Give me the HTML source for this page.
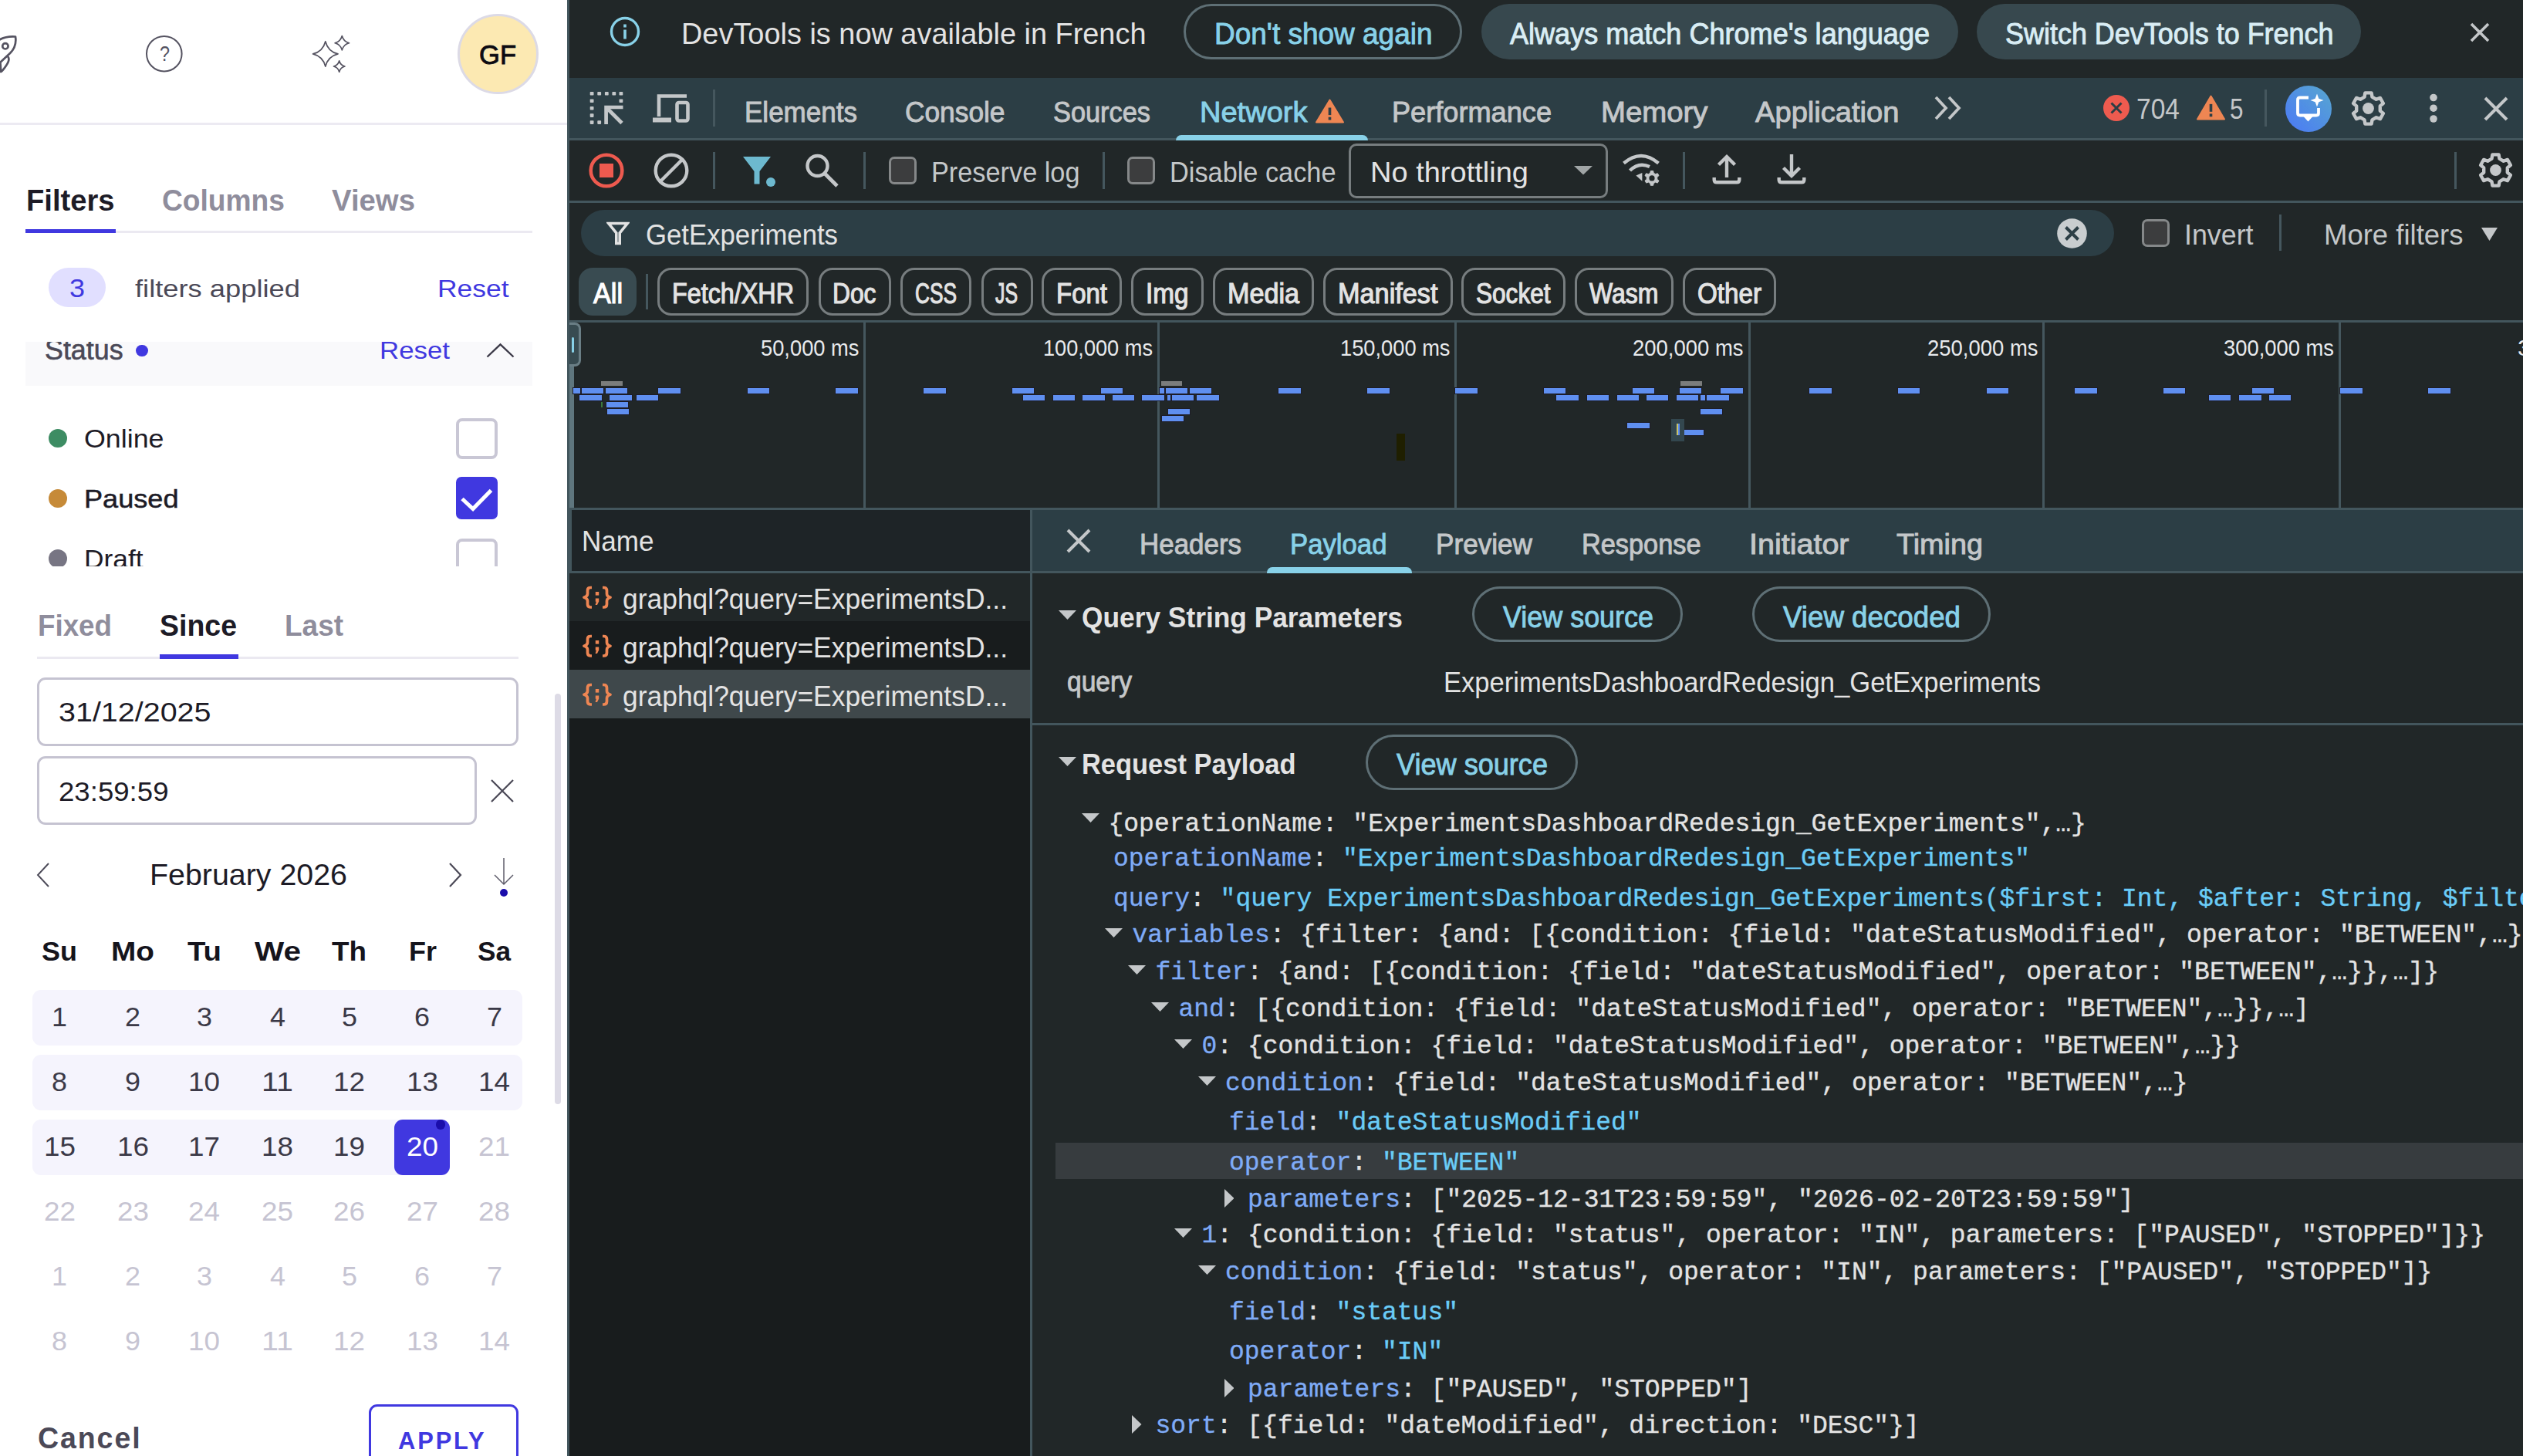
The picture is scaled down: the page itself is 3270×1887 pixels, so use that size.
<!DOCTYPE html>
<html><head><meta charset="utf-8"><title>Experiments</title><style>
html,body{margin:0;padding:0;}
body{width:3270px;height:1887px;overflow:hidden;position:relative;background:#fff;font-family:"Liberation Sans",sans-serif;}
.a{position:absolute;box-sizing:border-box;}
.t{position:absolute;white-space:pre;line-height:1;transform-origin:0 0;font-family:"Liberation Sans",sans-serif;}
.m{font-family:"Liberation Mono",monospace;}
</style></head>
<body>
<div class="a " style="left:0.0px;top:0.0px;width:735.0px;height:1887.0px;background:#ffffff;"></div>
<div class="a " style="left:0.0px;top:158.5px;width:735.0px;height:3.0px;background:#eceaf2;"></div>
<svg class="a" style="left:0.0px;top:40.0px;" width="30" height="60" viewBox="0 0 30 60"><g fill="none" stroke="#555361" stroke-width="2.7" stroke-linejoin="round" stroke-linecap="round"><path d="M-3 13 Q6 6.5 20 7.5 Q22 20 13 29 L-3 44"/><circle cx="6.9" cy="19.8" r="3.7"/><path d="M10.7 34 Q13 38 8 45 Q4 51 1.5 53 L-3 53 M0.5 42 L1.2 52"/></g></svg>
<svg class="a" style="left:188.0px;top:45.0px;" width="50" height="50" viewBox="0 0 50 50"><circle cx="24.8" cy="24.7" r="22.8" fill="none" stroke="#555361" stroke-width="2"/></svg>
<svg class="a" style="left:400.0px;top:40.0px;" width="60" height="60" viewBox="0 0 60 60"><g fill="none" stroke="#555361" stroke-width="1.7" stroke-linejoin="round"><path d="M21.8 13.7 Q25.04 26.659999999999997 38.0 29.9 Q25.04 33.14 21.8 46.099999999999994 Q18.560000000000002 33.14 5.600000000000001 29.9 Q18.560000000000002 26.659999999999997 21.8 13.7Z"/><path d="M43.3 6.5 Q45.14 13.86 52.5 15.7 Q45.14 17.54 43.3 24.9 Q41.459999999999994 17.54 34.099999999999994 15.7 Q41.459999999999994 13.86 43.3 6.5Z"/><path d="M39.7 38.8 Q41.14 44.56 46.900000000000006 46 Q41.14 47.44 39.7 53.2 Q38.260000000000005 47.44 32.5 46 Q38.260000000000005 44.56 39.7 38.8Z"/></g></svg>
<div class="a " style="left:593.3px;top:17.5px;width:104.7px;height:104.7px;background:#fce9b2;border-radius:50%;border:3px solid #dcdae6;"></div>
<div class="a " style="left:33.0px;top:298.5px;width:657.0px;height:3.0px;background:#ebe9f1;"></div>
<div class="a " style="left:33.0px;top:296.5px;width:117.0px;height:5.5px;background:#4038e0;"></div>
<div class="a " style="left:63.0px;top:346.5px;width:74.0px;height:51.0px;background:#e1dfff;border-radius:26px;"></div>
<div class="a " style="left:33.0px;top:442.5px;width:657.0px;height:57.0px;background:#f9f9fb;"></div>
<div class="a" style="left:33px;top:443px;width:657px;height:56px;overflow:hidden;"><span class="t" style="left:25px;top:-7.1px;font-size:36px;color:#4b4957;-webkit-text-stroke:0.6px;transform:scaleX(0.995)">Status</span></div>
<div class="a " style="left:176.0px;top:446.5px;width:15.5px;height:15.5px;background:#4038e0;border-radius:50%;"></div>
<svg class="a" style="left:629.0px;top:443.0px;" width="40" height="22" viewBox="0 0 40 22"><path d="M2.5 19.5 L19.5 3.5 L36.5 19.5" fill="none" stroke="#3b3947" stroke-width="2.4"/></svg>
<div class="a " style="left:63.0px;top:556.0px;width:24.0px;height:24.0px;background:#3d8c63;border-radius:50%;"></div>
<div class="a " style="left:591.0px;top:541.5px;width:53.5px;height:53.0px;background:#ffffff;border:4px solid #c9c7d5;border-radius:8px;"></div>
<div class="a " style="left:63.0px;top:634.0px;width:24.0px;height:24.0px;background:#c68a38;border-radius:50%;"></div>
<div class="a " style="left:591.0px;top:618.0px;width:53.5px;height:54.5px;background:#4038e0;border-radius:7px;"></div>
<svg class="a" style="left:591.0px;top:618.0px;" width="54" height="55" viewBox="0 0 54 55"><path d="M8 28.5 L22 41.5 L45.5 17.5" fill="none" stroke="#fff" stroke-width="5"/></svg>
<div class="a" style="left:33px;top:690px;width:657px;height:44px;overflow:hidden;"><div class="a" style="left:30px;top:22px;width:24px;height:24px;border-radius:50%;background:#777583"></div><span class="t" style="left:76px;top:17.2px;font-size:34px;color:#1d1b26;transform:scaleX(1.04)">Draft</span><div class="a" style="left:558px;top:7.5px;width:53.5px;height:53px;border:4px solid #c9c7d5;border-radius:8px;"></div></div>
<div class="a " style="left:48.0px;top:850.5px;width:624.0px;height:3.0px;background:#ebe9f1;"></div>
<div class="a " style="left:206.5px;top:848.0px;width:102.5px;height:5.5px;background:#4038e0;"></div>
<div class="a " style="left:48.0px;top:877.5px;width:624.0px;height:89.5px;background:#fff;border:3px solid #c5c3d1;border-radius:11px;"></div>
<div class="a " style="left:48.0px;top:980.0px;width:570.0px;height:89.0px;background:#fff;border:3px solid #c5c3d1;border-radius:11px;"></div>
<svg class="a" style="left:634.0px;top:1008.0px;" width="34" height="34" viewBox="0 0 34 34"><path d="M3 3 L31 31 M31 3 L3 31" fill="none" stroke="#4b4957" stroke-width="2.2"/></svg>
<div class="a " style="left:719.0px;top:899.0px;width:7.5px;height:532.0px;background:#dddbe6;border-radius:4px;"></div>
<svg class="a" style="left:44.0px;top:1116.0px;" width="24" height="36" viewBox="0 0 24 36"><path d="M19 3 L5 18 L19 33" fill="none" stroke="#4b4957" stroke-width="1.9"/></svg>
<svg class="a" style="left:578.0px;top:1116.0px;" width="24" height="36" viewBox="0 0 24 36"><path d="M5 3 L19 18 L5 33" fill="none" stroke="#4b4957" stroke-width="2.2"/></svg>
<svg class="a" style="left:638.0px;top:1109.0px;" width="30" height="42" viewBox="0 0 30 42"><path d="M15 3 L15 37 M3 25 L15 37 L27 25" fill="none" stroke="#5f5d6b" stroke-width="1.5"/></svg>
<div class="a " style="left:647.5px;top:1151.5px;width:10.5px;height:10.5px;background:#1a0dab;border-radius:50%;"></div>
<div class="a " style="left:42.0px;top:1283.0px;width:635.0px;height:71.5px;background:#f5f4fd;border-radius:11px;"></div>
<div class="a " style="left:42.0px;top:1367.0px;width:635.0px;height:71.5px;background:#f5f4fd;border-radius:11px;"></div>
<div class="a " style="left:42.0px;top:1451.0px;width:520.0px;height:71.5px;background:#f5f4fd;border-radius:11px;"></div>
<div class="a " style="left:511.0px;top:1451.0px;width:72.0px;height:71.5px;background:#4038e0;border-radius:11px;"></div>
<div class="a " style="left:564.5px;top:1451.0px;width:12.5px;height:12.5px;background:#1a0dab;border-radius:50%;"></div>
<div class="a " style="left:477.5px;top:1820.0px;width:194.5px;height:90.0px;background:#fff;border:3.5px solid #4038e0;border-radius:11px;"></div>
<div class="a " style="left:735.0px;top:0.0px;width:2535.0px;height:1887.0px;background:#212728;"></div>
<div class="a " style="left:735.0px;top:0.0px;width:3.0px;height:1887.0px;background:#43565d;"></div>
<svg class="a" style="left:789.0px;top:20.0px;" width="42" height="42" viewBox="0 0 42 42"><circle cx="21" cy="21" r="17.5" fill="none" stroke="#88d1e8" stroke-width="3.4"/><rect x="19.2" y="18.5" width="3.6" height="12" fill="#88d1e8"/><rect x="19.2" y="11.5" width="3.6" height="4" fill="#88d1e8"/></svg>
<div class="a " style="left:1534.0px;top:5.0px;width:361.0px;height:72.0px;border:3px solid #5e6f75;border-radius:36px;"></div>
<div class="a " style="left:1920.0px;top:5.0px;width:617.5px;height:72.0px;background:#37484e;border-radius:36px;"></div>
<div class="a " style="left:2562.0px;top:5.0px;width:498.0px;height:72.0px;background:#37484e;border-radius:36px;"></div>
<svg class="a" style="left:3198.0px;top:26.0px;" width="32" height="32" viewBox="0 0 32 32"><path d="M5 5 L27 27 M27 5 L5 27" fill="none" stroke="#c4c7c9" stroke-width="3.6"/></svg>
<div class="a " style="left:738.0px;top:101.0px;width:2532.0px;height:78.0px;background:#2c3e45;"></div>
<div class="a " style="left:738.0px;top:179.0px;width:2532.0px;height:3.0px;background:#43565d;"></div>
<svg class="a" style="left:764.0px;top:118.0px;" width="45" height="45" viewBox="0 0 45 45"><rect x="0.7" y="1" width="4.8" height="4.6" rx="0.8" fill="#c4c7c9"/><rect x="10.3" y="1" width="4.8" height="4.6" rx="0.8" fill="#c4c7c9"/><rect x="19.9" y="1" width="4.8" height="4.6" rx="0.8" fill="#c4c7c9"/><rect x="29.4" y="1" width="4.8" height="4.6" rx="0.8" fill="#c4c7c9"/><rect x="38.5" y="1" width="4.8" height="4.6" rx="0.8" fill="#c4c7c9"/><rect x="0.7" y="10.5" width="4.8" height="4.6" rx="0.8" fill="#c4c7c9"/><rect x="0.7" y="20" width="4.8" height="4.6" rx="0.8" fill="#c4c7c9"/><rect x="0.7" y="29.3" width="4.8" height="4.6" rx="0.8" fill="#c4c7c9"/><rect x="0.7" y="38.3" width="4.8" height="4.6" rx="0.8" fill="#c4c7c9"/><rect x="10.3" y="38.3" width="4.8" height="4.6" rx="0.8" fill="#c4c7c9"/><rect x="38.5" y="10.5" width="4.8" height="4.6" rx="0.8" fill="#c4c7c9"/><path d="M21.6 43 V21 H43.5" fill="none" stroke="#c4c7c9" stroke-width="4.7"/><path d="M22.5 22 L42 41.5" stroke="#c4c7c9" stroke-width="4.7"/></svg>
<svg class="a" style="left:845.0px;top:121.0px;" width="50" height="39" viewBox="0 0 50 39"><g fill="none" stroke="#c4c7c9" stroke-width="4.6"><path d="M45 3.5 H9 V30"/><path d="M1 34.5 H25" stroke-width="6"/><rect x="32.5" y="12" width="14" height="23.5" rx="2.5"/></g></svg>
<div class="a " style="left:924.0px;top:116.0px;width:3.0px;height:48.0px;background:#45575e;"></div>
<svg class="a" style="left:1704.5px;top:128.0px;" width="37" height="32" viewBox="0 0 37 32"><path d="M18.5 1.5 L36 30.5 L1 30.5 Z" fill="#ee8653" stroke="#ee8653" stroke-width="2" stroke-linejoin="round"/><rect x="16.7" y="11.52" width="3.6" height="9.6" fill="#2c3e45"/><rect x="16.7" y="23.68" width="3.6" height="3.8" fill="#2c3e45"/></svg>
<div class="a " style="left:1524.0px;top:174.5px;width:249.0px;height:7.5px;background:#88d1e8;border-radius:7px 7px 0 0;"></div>
<svg class="a" style="left:2505.0px;top:121.0px;" width="40" height="38" viewBox="0 0 40 38"><path d="M4 5 L17 19 L4 33 M21 5 L34 19 L21 33" fill="none" stroke="#c4c7c9" stroke-width="3.8"/></svg>
<svg class="a" style="left:2725.0px;top:122.0px;" width="36" height="36" viewBox="0 0 36 36"><circle cx="18" cy="18" r="17" fill="#ee5b4f"/><path d="M11.5 11.5 L24.5 24.5 M24.5 11.5 L11.5 24.5" stroke="#2c3e45" stroke-width="3"/></svg>
<svg class="a" style="left:2847.0px;top:123.0px;" width="37" height="33" viewBox="0 0 37 33"><path d="M18.5 1.5 L36 31.5 L1 31.5 Z" fill="#ee8653" stroke="#ee8653" stroke-width="2" stroke-linejoin="round"/><rect x="16.7" y="11.879999999999999" width="3.6" height="9.9" fill="#2c3e45"/><rect x="16.7" y="24.419999999999998" width="3.6" height="3.8" fill="#2c3e45"/></svg>
<div class="a " style="left:2935.0px;top:116.0px;width:3.0px;height:48.0px;background:#45575e;"></div>
<div class="a " style="left:2961.5px;top:110.5px;width:60.0px;height:60.0px;border-radius:50%;background:linear-gradient(45deg,#4c7df3 10%,#56a3d3 90%);"></div>
<svg class="a" style="left:2961.0px;top:110.0px;" width="61" height="61" viewBox="0 0 61 61"><path d="M31 16.5 H20 Q17 16.5 17 19.5 V36.5 Q17 39.5 20 39.5 H41 Q44 39.5 44 36.5 V30" fill="none" stroke="#fff" stroke-width="3.8" stroke-linejoin="round"/><path d="M24.5 41 H36.5 L30.5 47.5Z" fill="#fff"/><path d="M42 11.5 L44.3 17.7 L50.5 20 L44.3 22.3 L42 28.5 L39.7 22.3 L33.5 20 L39.7 17.7Z" fill="#fff"/></svg>
<svg class="a" style="left:3045.0px;top:115.5px;" width="49.0" height="49.0" viewBox="0 0 49.0 49.0"><path d="M20.4 4.4 L28.6 4.4 L29.5 9.7 L34.8 12.8 L39.9 10.9 L43.9 18.0 L39.8 21.4 L39.8 27.6 L43.9 31.0 L39.9 38.1 L34.8 36.2 L29.5 39.3 L28.6 44.6 L20.4 44.6 L19.5 39.3 L14.2 36.2 L9.1 38.1 L5.1 31.0 L9.2 27.6 L9.2 21.4 L5.1 18.0 L9.1 10.9 L14.2 12.8 L19.5 9.7 Z" fill="none" stroke="#c4c7c9" stroke-width="4.4" stroke-linejoin="round"/><circle cx="24.5" cy="24.5" r="7.4" fill="#c4c7c9"/></svg>
<svg class="a" style="left:3143.0px;top:118.0px;" width="22" height="46" viewBox="0 0 22 46"><circle cx="11" cy="8.5" r="4.8" fill="#c4c7c9"/><circle cx="11" cy="22.2" r="4.8" fill="#c4c7c9"/><circle cx="11" cy="36" r="4.8" fill="#c4c7c9"/></svg>
<svg class="a" style="left:3218.0px;top:124.0px;" width="34" height="34" viewBox="0 0 34 34"><path d="M3 3 L31 31 M31 3 L3 31" fill="none" stroke="#c4c7c9" stroke-width="4"/></svg>
<div class="a " style="left:738.0px;top:260.0px;width:2532.0px;height:3.0px;background:#43565d;"></div>
<svg class="a" style="left:762.0px;top:197.0px;" width="48" height="48" viewBox="0 0 48 48"><circle cx="24" cy="24" r="20.3" fill="none" stroke="#ee5a4f" stroke-width="4.6"/><rect x="15" y="15" width="18" height="18" fill="#ee5a4f"/></svg>
<svg class="a" style="left:846.0px;top:197.0px;" width="48" height="48" viewBox="0 0 48 48"><circle cx="24" cy="24" r="20.3" fill="none" stroke="#c4c7c9" stroke-width="4.4"/><path d="M10 38 L38 10" stroke="#c4c7c9" stroke-width="4.4"/></svg>
<div class="a " style="left:924.0px;top:197.0px;width:3.0px;height:48.0px;background:#45575e;"></div>
<svg class="a" style="left:961.0px;top:201.0px;" width="48" height="42" viewBox="0 0 48 42"><path d="M2 2 H38 L23.5 21 V37.5 H16.5 V21 Z" fill="#6db9cf"/><circle cx="38" cy="35" r="6" fill="#6db9cf"/></svg>
<svg class="a" style="left:1040.0px;top:196.0px;" width="50" height="50" viewBox="0 0 50 50"><circle cx="19.5" cy="19" r="13" fill="none" stroke="#c4c7c9" stroke-width="4.4"/><path d="M28.5 28.5 L45 45" stroke="#c4c7c9" stroke-width="4.8"/></svg>
<div class="a " style="left:1119.0px;top:197.0px;width:3.0px;height:48.0px;background:#45575e;"></div>
<div class="a " style="left:1152.0px;top:203.0px;width:36.0px;height:36.0px;background:#3c3d3e;border:3px solid #858889;border-radius:7px;"></div>
<div class="a " style="left:1428.5px;top:197.0px;width:3.0px;height:48.0px;background:#45575e;"></div>
<div class="a " style="left:1460.5px;top:203.0px;width:36.0px;height:36.0px;background:#3c3d3e;border:3px solid #858889;border-radius:7px;"></div>
<div class="a " style="left:1748.0px;top:185.5px;width:336.0px;height:71.0px;border:3px solid #777d7f;border-radius:10px;"></div>
<svg class="a" style="left:2039.0px;top:214.0px;" width="27" height="14" viewBox="0 0 27 14"><path d="M1 1 H25 L13 12.5Z" fill="#a0a5a6"/></svg>
<svg class="a" style="left:2102.0px;top:197.0px;" width="52" height="46" viewBox="0 0 52 46"><g fill="none" stroke="#c4c7c9" stroke-width="4.4"><path d="M2.5 14.5 Q25 -4.5 47.5 14.5"/><path d="M10.5 24 Q22 12.5 36 19"/></g><path d="M18.4 30.5 L26.4 27 L26.4 37.7Z" fill="#c4c7c9"/><path d="M37.3 24.5 L40.7 24.5 L41.2 27.2 L43.7 28.7 L46.3 27.7 L48.0 30.6 L45.8 32.4 L45.8 35.4 L48.0 37.2 L46.3 40.1 L43.7 39.1 L41.2 40.6 L40.7 43.3 L37.3 43.3 L36.8 40.6 L34.3 39.1 L31.7 40.1 L30.0 37.2 L32.2 35.4 L32.2 32.4 L30.0 30.6 L31.7 27.7 L34.3 28.7 L36.8 27.2 Z" fill="#c4c7c9" stroke="#c4c7c9" stroke-width="1" stroke-linejoin="round"/><circle cx="39" cy="33.9" r="3.6" fill="#212728"/></svg>
<div class="a " style="left:2181.0px;top:197.0px;width:3.0px;height:48.0px;background:#45575e;"></div>
<svg class="a" style="left:2218.0px;top:198.0px;" width="40" height="42" viewBox="0 0 40 42"><g fill="none" stroke="#c4c7c9" stroke-width="4.4"><path d="M20 32 V5 M9.5 15.5 L20 5 L30.5 15.5"/><path d="M3.7 32 V35 Q3.7 38.3 7 38.3 H33 Q36.3 38.3 36.3 35 V32"/></g></svg>
<svg class="a" style="left:2302.0px;top:198.0px;" width="40" height="42" viewBox="0 0 40 42"><g fill="none" stroke="#c4c7c9" stroke-width="4.4"><path d="M20 2 V29 M9.5 19.5 L20 30 L30.5 19.5"/><path d="M3.7 32 V35 Q3.7 38.3 7 38.3 H33 Q36.3 38.3 36.3 35 V32"/></g></svg>
<div class="a " style="left:3181.0px;top:197.0px;width:3.0px;height:48.0px;background:#45575e;"></div>
<svg class="a" style="left:3210.0px;top:196.0px;" width="49.0" height="49.0" viewBox="0 0 49.0 49.0"><path d="M20.4 4.4 L28.6 4.4 L29.5 9.7 L34.8 12.8 L39.9 10.9 L43.9 18.0 L39.8 21.4 L39.8 27.6 L43.9 31.0 L39.9 38.1 L34.8 36.2 L29.5 39.3 L28.6 44.6 L20.4 44.6 L19.5 39.3 L14.2 36.2 L9.1 38.1 L5.1 31.0 L9.2 27.6 L9.2 21.4 L5.1 18.0 L9.1 10.9 L14.2 12.8 L19.5 9.7 Z" fill="none" stroke="#c4c7c9" stroke-width="4.4" stroke-linejoin="round"/><circle cx="24.5" cy="24.5" r="7.4" fill="#c4c7c9"/></svg>
<div class="a " style="left:752.5px;top:272.0px;width:1987.5px;height:59.5px;background:#2c3e45;border-radius:30px;"></div>
<svg class="a" style="left:786.0px;top:287.0px;" width="30" height="31" viewBox="0 0 30 31"><path d="M2.8 2.5 H27.2 L17.2 15 V28.5 H12.8 V15 Z" fill="none" stroke="#e3e3e3" stroke-width="3.6" stroke-linejoin="miter"/></svg>
<svg class="a" style="left:2666.0px;top:283.0px;" width="39" height="39" viewBox="0 0 39 39"><circle cx="19.5" cy="19.5" r="19.3" fill="#c9cdcf"/><path d="M11.5 11.5 L27.5 27.5 M27.5 11.5 L11.5 27.5" stroke="#2c3e45" stroke-width="4"/></svg>
<div class="a " style="left:2775.5px;top:284.0px;width:36.0px;height:36.0px;background:#3c3d3e;border:3px solid #858889;border-radius:7px;"></div>
<div class="a " style="left:2954.0px;top:278.0px;width:3.0px;height:47.0px;background:#45575e;"></div>
<svg class="a" style="left:3215.0px;top:294.0px;" width="23" height="19" viewBox="0 0 23 19"><path d="M1 1 H22 L11.5 18Z" fill="#c4c7c9"/></svg>
<div class="a " style="left:750.0px;top:347.0px;width:75.0px;height:61.5px;background:#394b51;border-radius:18px;"></div>
<div class="a " style="left:837.0px;top:355.0px;width:2.5px;height:46.0px;background:#45575e;"></div>
<div class="a " style="left:852.0px;top:347.0px;width:196.0px;height:61.5px;border:3px solid #777d7f;border-radius:18px;"></div>
<div class="a " style="left:1060.5px;top:347.0px;width:94.5px;height:61.5px;border:3px solid #777d7f;border-radius:18px;"></div>
<div class="a " style="left:1167.0px;top:347.0px;width:92.0px;height:61.5px;border:3px solid #777d7f;border-radius:18px;"></div>
<div class="a " style="left:1271.5px;top:347.0px;width:67.0px;height:61.5px;border:3px solid #777d7f;border-radius:18px;"></div>
<div class="a " style="left:1350.0px;top:347.0px;width:104.0px;height:61.5px;border:3px solid #777d7f;border-radius:18px;"></div>
<div class="a " style="left:1466.0px;top:347.0px;width:93.5px;height:61.5px;border:3px solid #777d7f;border-radius:18px;"></div>
<div class="a " style="left:1572.0px;top:347.0px;width:131.0px;height:61.5px;border:3px solid #777d7f;border-radius:18px;"></div>
<div class="a " style="left:1715.0px;top:347.0px;width:167.5px;height:61.5px;border:3px solid #777d7f;border-radius:18px;"></div>
<div class="a " style="left:1894.0px;top:347.0px;width:134.5px;height:61.5px;border:3px solid #777d7f;border-radius:18px;"></div>
<div class="a " style="left:2041.0px;top:347.0px;width:127.5px;height:61.5px;border:3px solid #777d7f;border-radius:18px;"></div>
<div class="a " style="left:2181.0px;top:347.0px;width:121.0px;height:61.5px;border:3px solid #777d7f;border-radius:18px;"></div>
<div class="a " style="left:738.0px;top:414.5px;width:2532.0px;height:3.0px;background:#43565d;"></div>
<div class="a " style="left:738.0px;top:417.5px;width:6.0px;height:241.0px;background:#5f767e;"></div>
<div class="a " style="left:1119.0px;top:417.5px;width:3.0px;height:241.0px;background:#45575e;"></div>
<div class="a " style="left:1500.0px;top:417.5px;width:3.0px;height:241.0px;background:#45575e;"></div>
<div class="a " style="left:1885.0px;top:417.5px;width:3.0px;height:241.0px;background:#45575e;"></div>
<div class="a " style="left:2266.0px;top:417.5px;width:3.0px;height:241.0px;background:#45575e;"></div>
<div class="a " style="left:2647.0px;top:417.5px;width:3.0px;height:241.0px;background:#45575e;"></div>
<div class="a " style="left:3031.0px;top:417.5px;width:3.0px;height:241.0px;background:#45575e;"></div>
<div class="a " style="left:738.0px;top:418.0px;width:15.0px;height:57.0px;background:#384b51;border-radius:0 8px 8px 0;border:3px solid #6a7e85;border-left:none;"></div>
<div class="a " style="left:741.0px;top:436.5px;width:3.0px;height:20.5px;background:#88d1e8;border-radius:1.5px;"></div>
<div class="a " style="left:742.4px;top:501.8px;width:10.6px;height:9.2px;background:#5f8ff0;border:1.6px solid #1d1c27;"></div>
<div class="a " style="left:753.2px;top:501.8px;width:30.3px;height:9.2px;background:#5f8ff0;border:1.6px solid #1d1c27;"></div>
<div class="a " style="left:784.2px;top:501.8px;width:30.3px;height:9.2px;background:#5f8ff0;border:1.6px solid #1d1c27;"></div>
<div class="a " style="left:852.4px;top:501.8px;width:30.9px;height:9.2px;background:#5f8ff0;border:1.6px solid #1d1c27;"></div>
<div class="a " style="left:967.5px;top:501.8px;width:30.6px;height:9.2px;background:#5f8ff0;border:1.6px solid #1d1c27;"></div>
<div class="a " style="left:1081.6px;top:501.8px;width:31.2px;height:9.2px;background:#5f8ff0;border:1.6px solid #1d1c27;"></div>
<div class="a " style="left:1196.4px;top:501.8px;width:30.9px;height:9.2px;background:#5f8ff0;border:1.6px solid #1d1c27;"></div>
<div class="a " style="left:1311.2px;top:501.8px;width:30.3px;height:9.2px;background:#5f8ff0;border:1.6px solid #1d1c27;"></div>
<div class="a " style="left:1425.6px;top:501.8px;width:30.6px;height:9.2px;background:#5f8ff0;border:1.6px solid #1d1c27;"></div>
<div class="a " style="left:1502.4px;top:501.8px;width:7.8px;height:9.2px;background:#5f8ff0;border:1.6px solid #1d1c27;"></div>
<div class="a " style="left:1509.7px;top:501.8px;width:30.6px;height:9.2px;background:#5f8ff0;border:1.6px solid #1d1c27;"></div>
<div class="a " style="left:750.0px;top:510.9px;width:30.9px;height:9.2px;background:#5f8ff0;border:1.6px solid #1d1c27;"></div>
<div class="a " style="left:789.0px;top:510.9px;width:30.6px;height:9.2px;background:#5f8ff0;border:1.6px solid #1d1c27;"></div>
<div class="a " style="left:823.9px;top:510.9px;width:30.6px;height:9.2px;background:#5f8ff0;border:1.6px solid #1d1c27;"></div>
<div class="a " style="left:1324.8px;top:510.9px;width:30.6px;height:9.2px;background:#5f8ff0;border:1.6px solid #1d1c27;"></div>
<div class="a " style="left:1363.5px;top:510.9px;width:30.9px;height:9.2px;background:#5f8ff0;border:1.6px solid #1d1c27;"></div>
<div class="a " style="left:1401.9px;top:510.9px;width:30.9px;height:9.2px;background:#5f8ff0;border:1.6px solid #1d1c27;"></div>
<div class="a " style="left:1440.5px;top:510.9px;width:30.9px;height:9.2px;background:#5f8ff0;border:1.6px solid #1d1c27;"></div>
<div class="a " style="left:1479.2px;top:510.9px;width:30.9px;height:9.2px;background:#5f8ff0;border:1.6px solid #1d1c27;"></div>
<div class="a " style="left:1511.9px;top:510.9px;width:6.2px;height:9.2px;background:#5f8ff0;border:1.6px solid #1d1c27;"></div>
<div class="a " style="left:1518.2px;top:510.9px;width:29.9px;height:9.2px;background:#5f8ff0;border:1.6px solid #1d1c27;"></div>
<div class="a " style="left:784.9px;top:519.9px;width:30.3px;height:9.2px;background:#5f8ff0;border:1.6px solid #1d1c27;"></div>
<div class="a " style="left:785.8px;top:529.0px;width:30.6px;height:9.2px;background:#5f8ff0;border:1.6px solid #1d1c27;"></div>
<div class="a " style="left:1512.8px;top:529.0px;width:30.6px;height:9.2px;background:#5f8ff0;border:1.6px solid #1d1c27;"></div>
<div class="a " style="left:1504.6px;top:538.0px;width:30.9px;height:9.2px;background:#5f8ff0;border:1.6px solid #1d1c27;"></div>
<div class="a " style="left:778.8px;top:494.3px;width:28.5px;height:6.0px;background:#7b7d7d;"></div>
<div class="a " style="left:1504.5px;top:494.3px;width:27.9px;height:6.0px;background:#7b7d7d;"></div>
<div class="a " style="left:778.8px;top:521.0px;width:2.0px;height:7.0px;background:#3c7a3c;"></div>
<div class="a " style="left:1540.5px;top:501.8px;width:30.3px;height:9.2px;background:#5f8ff0;border:1.6px solid #1d1c27;"></div>
<div class="a " style="left:1655.6px;top:501.8px;width:31.5px;height:9.2px;background:#5f8ff0;border:1.6px solid #1d1c27;"></div>
<div class="a " style="left:1770.7px;top:501.8px;width:30.9px;height:9.2px;background:#5f8ff0;border:1.6px solid #1d1c27;"></div>
<div class="a " style="left:1885.4px;top:501.8px;width:30.6px;height:9.2px;background:#5f8ff0;border:1.6px solid #1d1c27;"></div>
<div class="a " style="left:2000.2px;top:501.8px;width:30.3px;height:9.2px;background:#5f8ff0;border:1.6px solid #1d1c27;"></div>
<div class="a " style="left:2114.7px;top:501.8px;width:30.6px;height:9.2px;background:#5f8ff0;border:1.6px solid #1d1c27;"></div>
<div class="a " style="left:2176.2px;top:501.8px;width:30.3px;height:9.2px;background:#5f8ff0;border:1.6px solid #1d1c27;"></div>
<div class="a " style="left:2229.4px;top:501.8px;width:30.6px;height:9.2px;background:#5f8ff0;border:1.6px solid #1d1c27;"></div>
<div class="a " style="left:1550.3px;top:510.9px;width:31.2px;height:9.2px;background:#5f8ff0;border:1.6px solid #1d1c27;"></div>
<div class="a " style="left:2016.4px;top:510.9px;width:30.6px;height:9.2px;background:#5f8ff0;border:1.6px solid #1d1c27;"></div>
<div class="a " style="left:2055.7px;top:510.9px;width:30.3px;height:9.2px;background:#5f8ff0;border:1.6px solid #1d1c27;"></div>
<div class="a " style="left:2094.7px;top:510.9px;width:29.9px;height:9.2px;background:#5f8ff0;border:1.6px solid #1d1c27;"></div>
<div class="a " style="left:2132.7px;top:510.9px;width:30.6px;height:9.2px;background:#5f8ff0;border:1.6px solid #1d1c27;"></div>
<div class="a " style="left:2172.4px;top:510.9px;width:29.9px;height:9.2px;background:#5f8ff0;border:1.6px solid #1d1c27;"></div>
<div class="a " style="left:2202.5px;top:510.9px;width:8.7px;height:9.2px;background:#5f8ff0;border:1.6px solid #1d1c27;"></div>
<div class="a " style="left:2211.4px;top:510.9px;width:30.6px;height:9.2px;background:#5f8ff0;border:1.6px solid #1d1c27;"></div>
<div class="a " style="left:2202.5px;top:529.0px;width:30.6px;height:9.2px;background:#5f8ff0;border:1.6px solid #1d1c27;"></div>
<div class="a " style="left:2108.3px;top:546.8px;width:30.6px;height:9.2px;background:#5f8ff0;border:1.6px solid #1d1c27;"></div>
<div class="a " style="left:2181.2px;top:555.8px;width:27.4px;height:9.2px;background:#5f8ff0;border:1.6px solid #1d1c27;"></div>
<div class="a " style="left:2177.7px;top:494.3px;width:27.9px;height:6.0px;background:#7b7d7d;"></div>
<div class="a " style="left:2166.0px;top:542.5px;width:17.0px;height:29.5px;background:#33474f;"></div>
<div class="a " style="left:2172.5px;top:548.5px;width:2.0px;height:15.0px;background:#c9c46a;"></div>
<div class="a " style="left:2174.5px;top:548.5px;width:2.5px;height:15.0px;background:#5f8ff0;"></div>
<div class="a " style="left:1810.0px;top:562.0px;width:11.0px;height:35.0px;background:#1f1f00;"></div>
<div class="a " style="left:2344.0px;top:501.8px;width:30.6px;height:9.2px;background:#5f8ff0;border:1.6px solid #1d1c27;"></div>
<div class="a " style="left:2458.7px;top:501.8px;width:30.6px;height:9.2px;background:#5f8ff0;border:1.6px solid #1d1c27;"></div>
<div class="a " style="left:2573.5px;top:501.8px;width:30.3px;height:9.2px;background:#5f8ff0;border:1.6px solid #1d1c27;"></div>
<div class="a " style="left:2688.0px;top:501.8px;width:30.6px;height:9.2px;background:#5f8ff0;border:1.6px solid #1d1c27;"></div>
<div class="a " style="left:2802.7px;top:501.8px;width:29.9px;height:9.2px;background:#5f8ff0;border:1.6px solid #1d1c27;"></div>
<div class="a " style="left:2917.5px;top:501.8px;width:30.3px;height:9.2px;background:#5f8ff0;border:1.6px solid #1d1c27;"></div>
<div class="a " style="left:3032.0px;top:501.8px;width:30.6px;height:9.2px;background:#5f8ff0;border:1.6px solid #1d1c27;"></div>
<div class="a " style="left:2862.4px;top:510.9px;width:29.9px;height:9.2px;background:#5f8ff0;border:1.6px solid #1d1c27;"></div>
<div class="a " style="left:2901.0px;top:510.9px;width:30.6px;height:9.2px;background:#5f8ff0;border:1.6px solid #1d1c27;"></div>
<div class="a " style="left:2939.7px;top:510.9px;width:30.3px;height:9.2px;background:#5f8ff0;border:1.6px solid #1d1c27;"></div>
<div class="a " style="left:3146.3px;top:501.8px;width:30.8px;height:9.2px;background:#5f8ff0;border:1.6px solid #1d1c27;"></div>
<div class="a " style="left:738.0px;top:658.0px;width:2532.0px;height:3.0px;background:#43565d;"></div>
<div class="a " style="left:741.0px;top:661.0px;width:594.0px;height:78.5px;background:#1e2427;"></div>
<div class="a " style="left:738.0px;top:661.0px;width:3.0px;height:81.5px;background:#43565d;"></div>
<div class="a " style="left:741.0px;top:739.5px;width:594.0px;height:3.0px;background:#43565d;"></div>
<div class="a " style="left:1335.0px;top:661.0px;width:3.0px;height:1226.0px;background:#43565d;"></div>
<div class="a " style="left:738.0px;top:742.5px;width:597.0px;height:62.5px;background:#212728;"></div>
<div class="a " style="left:738.0px;top:805.0px;width:597.0px;height:62.5px;background:#181c1d;"></div>
<div class="a " style="left:738.0px;top:867.5px;width:597.0px;height:63.0px;background:#3f484b;"></div>
<div class="a " style="left:738.0px;top:930.5px;width:597.0px;height:957.0px;background:#181c1d;"></div>
<svg class="a" style="left:753.0px;top:759.0px;" width="42" height="31" viewBox="0 0 42 31"><g fill="none" stroke="#ee8653" stroke-width="3.7" stroke-linejoin="round"><path d="M14 2.5 H12.5 Q8.5 2.5 8.5 6.5 V10.5 Q8.5 14 4 15.2 Q8.5 16.4 8.5 20 V24 Q8.5 28 12.5 28 H14"/><path d="M28 2.5 H29.5 Q33.5 2.5 33.5 6.5 V10.5 Q33.5 14 38 15.2 Q33.5 16.4 33.5 20 V24 Q33.5 28 29.5 28 H28"/></g><rect x="18.8" y="8" width="4.4" height="4.6" fill="#ee8653"/><path d="M18.8 16.5 H23.2 V20.5 L21 25 H18.6 L19.8 20.8 H18.8Z" fill="#ee8653"/></svg>
<svg class="a" style="left:753.0px;top:822.0px;" width="42" height="31" viewBox="0 0 42 31"><g fill="none" stroke="#ee8653" stroke-width="3.7" stroke-linejoin="round"><path d="M14 2.5 H12.5 Q8.5 2.5 8.5 6.5 V10.5 Q8.5 14 4 15.2 Q8.5 16.4 8.5 20 V24 Q8.5 28 12.5 28 H14"/><path d="M28 2.5 H29.5 Q33.5 2.5 33.5 6.5 V10.5 Q33.5 14 38 15.2 Q33.5 16.4 33.5 20 V24 Q33.5 28 29.5 28 H28"/></g><rect x="18.8" y="8" width="4.4" height="4.6" fill="#ee8653"/><path d="M18.8 16.5 H23.2 V20.5 L21 25 H18.6 L19.8 20.8 H18.8Z" fill="#ee8653"/></svg>
<svg class="a" style="left:753.0px;top:884.5px;" width="42" height="31" viewBox="0 0 42 31"><g fill="none" stroke="#ee8653" stroke-width="3.7" stroke-linejoin="round"><path d="M14 2.5 H12.5 Q8.5 2.5 8.5 6.5 V10.5 Q8.5 14 4 15.2 Q8.5 16.4 8.5 20 V24 Q8.5 28 12.5 28 H14"/><path d="M28 2.5 H29.5 Q33.5 2.5 33.5 6.5 V10.5 Q33.5 14 38 15.2 Q33.5 16.4 33.5 20 V24 Q33.5 28 29.5 28 H28"/></g><rect x="18.8" y="8" width="4.4" height="4.6" fill="#ee8653"/><path d="M18.8 16.5 H23.2 V20.5 L21 25 H18.6 L19.8 20.8 H18.8Z" fill="#ee8653"/></svg>
<div class="a " style="left:1338.0px;top:661.0px;width:1932.0px;height:78.5px;background:#2c3e45;"></div>
<div class="a " style="left:1338.0px;top:739.5px;width:1932.0px;height:3.0px;background:#43565d;"></div>
<svg class="a" style="left:1381.0px;top:684.0px;" width="34" height="34" viewBox="0 0 34 34"><path d="M3 3 L31 31 M31 3 L3 31" fill="none" stroke="#c4c7c9" stroke-width="4"/></svg>
<div class="a " style="left:1641.5px;top:734.5px;width:188.5px;height:8.0px;background:#88d1e8;border-radius:7px 7px 0 0;"></div>
<svg class="a" style="left:1371.5px;top:790.5px;" width="23" height="12" viewBox="0 0 23 12"><path d="M0 0 H23 L11.5 12Z" fill="#c4c7c9"/></svg>
<div class="a " style="left:1908.0px;top:759.5px;width:273.0px;height:72.0px;border:3px solid #5e6f75;border-radius:36px;"></div>
<div class="a " style="left:2271.0px;top:759.5px;width:309.0px;height:72.0px;border:3px solid #5e6f75;border-radius:36px;"></div>
<div class="a " style="left:1338.0px;top:937.0px;width:1932.0px;height:3.0px;background:#43565d;"></div>
<svg class="a" style="left:1371.5px;top:981.0px;" width="23" height="12" viewBox="0 0 23 12"><path d="M0 0 H23 L11.5 12Z" fill="#c4c7c9"/></svg>
<div class="a " style="left:1770.0px;top:952.0px;width:274.5px;height:72.0px;border:3px solid #5e6f75;border-radius:36px;"></div>
<div class="a " style="left:1367.5px;top:1480.5px;width:1903.0px;height:47.0px;background:#373c3f;"></div>
<svg class="a" style="left:1402.0px;top:1054.0px;" width="23" height="12" viewBox="0 0 23 12"><path d="M0 0 H23 L11.5 12Z" fill="#c4c7c9"/></svg>
<svg class="a" style="left:1432.0px;top:1203.0px;" width="23" height="12" viewBox="0 0 23 12"><path d="M0 0 H23 L11.5 12Z" fill="#c4c7c9"/></svg>
<svg class="a" style="left:1462.0px;top:1251.0px;" width="23" height="12" viewBox="0 0 23 12"><path d="M0 0 H23 L11.5 12Z" fill="#c4c7c9"/></svg>
<svg class="a" style="left:1492.0px;top:1299.0px;" width="23" height="12" viewBox="0 0 23 12"><path d="M0 0 H23 L11.5 12Z" fill="#c4c7c9"/></svg>
<svg class="a" style="left:1522.0px;top:1347.0px;" width="23" height="12" viewBox="0 0 23 12"><path d="M0 0 H23 L11.5 12Z" fill="#c4c7c9"/></svg>
<svg class="a" style="left:1552.5px;top:1394.5px;" width="23" height="12" viewBox="0 0 23 12"><path d="M0 0 H23 L11.5 12Z" fill="#c4c7c9"/></svg>
<svg class="a" style="left:1586.5px;top:1541.0px;" width="12.5" height="24" viewBox="0 0 12.5 24"><path d="M0 0 V24 L12.5 12Z" fill="#c4c7c9"/></svg>
<svg class="a" style="left:1522.0px;top:1592.0px;" width="23" height="12" viewBox="0 0 23 12"><path d="M0 0 H23 L11.5 12Z" fill="#c4c7c9"/></svg>
<svg class="a" style="left:1552.5px;top:1640.0px;" width="23" height="12" viewBox="0 0 23 12"><path d="M0 0 H23 L11.5 12Z" fill="#c4c7c9"/></svg>
<svg class="a" style="left:1586.5px;top:1787.0px;" width="12.5" height="24" viewBox="0 0 12.5 24"><path d="M0 0 V24 L12.5 12Z" fill="#c4c7c9"/></svg>
<svg class="a" style="left:1467.0px;top:1834.0px;" width="12.5" height="24" viewBox="0 0 12.5 24"><path d="M0 0 V24 L12.5 12Z" fill="#c4c7c9"/></svg>
<span class="t" style="left:206.5px;top:56.3px;font-size:28px;color:#555361;transform:scaleX(0.8345);">?</span>
<span class="t" style="left:621.0px;top:53.1px;font-size:35px;color:#0c0b12;-webkit-text-stroke:0.9px;transform:scaleX(0.9875);">GF</span>
<span class="t" style="left:33.5px;top:241.3px;font-size:38px;color:#1d1b26;font-weight:700;transform:scaleX(1.0040);">Filters</span>
<span class="t" style="left:209.5px;top:241.3px;font-size:38px;color:#8f8d9c;font-weight:700;transform:scaleX(0.9781);">Columns</span>
<span class="t" style="left:429.5px;top:241.3px;font-size:38px;color:#8f8d9c;font-weight:700;transform:scaleX(1.0089);">Views</span>
<span class="t" style="left:90.0px;top:357.1px;font-size:33px;color:#4038e0;transform:scaleX(1.0894);">3</span>
<span class="t" style="left:174.5px;top:357.9px;font-size:32px;color:#4b4957;transform:scaleX(1.1350);">filters applied</span>
<span class="t" style="left:567.0px;top:357.9px;font-size:32px;color:#4038e0;transform:scaleX(1.1065);">Reset</span>
<span class="t" style="left:492.0px;top:438.4px;font-size:32px;color:#4038e0;transform:scaleX(1.0886);">Reset</span>
<span class="t" style="left:109.0px;top:551.2px;font-size:34px;color:#1d1b26;transform:scaleX(1.0531);">Online</span>
<span class="t" style="left:109.0px;top:629.2px;font-size:34px;color:#1d1b26;-webkit-text-stroke:0.5px;transform:scaleX(1.0622);">Paused</span>
<span class="t" style="left:48.5px;top:791.8px;font-size:38px;color:#8f8d9c;font-weight:700;transform:scaleX(0.9673);">Fixed</span>
<span class="t" style="left:206.5px;top:791.8px;font-size:38px;color:#1d1b26;font-weight:700;transform:scaleX(0.9863);">Since</span>
<span class="t" style="left:368.5px;top:791.8px;font-size:38px;color:#8f8d9c;font-weight:700;transform:scaleX(0.9726);">Last</span>
<span class="t" style="left:75.5px;top:905.4px;font-size:35px;color:#1d1b26;transform:scaleX(1.1275);">31/12/2025</span>
<span class="t" style="left:75.5px;top:1007.9px;font-size:35px;color:#1d1b26;transform:scaleX(1.0459);">23:59:59</span>
<span class="t" style="left:194.0px;top:1115.3px;font-size:38px;color:#1d1b26;transform:scaleX(1.0358);">February 2026</span>
<span class="t" style="left:54.0px;top:1214.9px;font-size:35px;color:#15141c;font-weight:700;transform:scaleX(1.0283);">Su</span>
<span class="t" style="left:144.0px;top:1214.9px;font-size:35px;color:#15141c;font-weight:700;transform:scaleX(1.1079);">Mo</span>
<span class="t" style="left:243.0px;top:1214.9px;font-size:35px;color:#15141c;font-weight:700;transform:scaleX(1.0953);">Tu</span>
<span class="t" style="left:330.0px;top:1214.9px;font-size:35px;color:#15141c;font-weight:700;transform:scaleX(1.1566);">We</span>
<span class="t" style="left:430.0px;top:1214.9px;font-size:35px;color:#15141c;font-weight:700;transform:scaleX(1.0522);">Th</span>
<span class="t" style="left:529.5px;top:1214.9px;font-size:35px;color:#15141c;font-weight:700;transform:scaleX(1.0286);">Fr</span>
<span class="t" style="left:619.0px;top:1214.9px;font-size:35px;color:#15141c;font-weight:700;transform:scaleX(1.0044);">Sa</span>
<span class="t" style="left:67.0px;top:1300.4px;font-size:35px;color:#3b3947;transform:scaleX(1.0273);">1</span>
<span class="t" style="left:162.0px;top:1300.4px;font-size:35px;color:#3b3947;transform:scaleX(1.0273);">2</span>
<span class="t" style="left:254.5px;top:1300.4px;font-size:35px;color:#3b3947;transform:scaleX(1.0273);">3</span>
<span class="t" style="left:349.5px;top:1300.4px;font-size:35px;color:#3b3947;transform:scaleX(1.0273);">4</span>
<span class="t" style="left:442.5px;top:1300.4px;font-size:35px;color:#3b3947;transform:scaleX(1.0273);">5</span>
<span class="t" style="left:537.0px;top:1300.4px;font-size:35px;color:#3b3947;transform:scaleX(1.0273);">6</span>
<span class="t" style="left:630.5px;top:1300.4px;font-size:35px;color:#3b3947;transform:scaleX(1.0273);">7</span>
<span class="t" style="left:67.0px;top:1383.9px;font-size:35px;color:#3b3947;transform:scaleX(1.0273);">8</span>
<span class="t" style="left:162.0px;top:1383.9px;font-size:35px;color:#3b3947;transform:scaleX(1.0273);">9</span>
<span class="t" style="left:244.0px;top:1383.9px;font-size:35px;color:#3b3947;transform:scaleX(1.0530);">10</span>
<span class="t" style="left:339.0px;top:1383.9px;font-size:35px;color:#3b3947;transform:scaleX(1.1281);">11</span>
<span class="t" style="left:432.0px;top:1383.9px;font-size:35px;color:#3b3947;transform:scaleX(1.0530);">12</span>
<span class="t" style="left:526.5px;top:1383.9px;font-size:35px;color:#3b3947;transform:scaleX(1.0530);">13</span>
<span class="t" style="left:620.0px;top:1383.9px;font-size:35px;color:#3b3947;transform:scaleX(1.0530);">14</span>
<span class="t" style="left:56.5px;top:1467.9px;font-size:35px;color:#3b3947;transform:scaleX(1.0530);">15</span>
<span class="t" style="left:151.5px;top:1467.9px;font-size:35px;color:#3b3947;transform:scaleX(1.0530);">16</span>
<span class="t" style="left:244.0px;top:1467.9px;font-size:35px;color:#3b3947;transform:scaleX(1.0530);">17</span>
<span class="t" style="left:339.0px;top:1467.9px;font-size:35px;color:#3b3947;transform:scaleX(1.0530);">18</span>
<span class="t" style="left:432.0px;top:1467.9px;font-size:35px;color:#3b3947;transform:scaleX(1.0530);">19</span>
<span class="t" style="left:526.5px;top:1467.9px;font-size:35px;color:#ffffff;transform:scaleX(1.0530);">20</span>
<span class="t" style="left:620.0px;top:1467.9px;font-size:35px;color:#c6c4d2;transform:scaleX(1.0530);">21</span>
<span class="t" style="left:56.5px;top:1551.9px;font-size:35px;color:#c6c4d2;transform:scaleX(1.0530);">22</span>
<span class="t" style="left:151.5px;top:1551.9px;font-size:35px;color:#c6c4d2;transform:scaleX(1.0530);">23</span>
<span class="t" style="left:244.0px;top:1551.9px;font-size:35px;color:#c6c4d2;transform:scaleX(1.0530);">24</span>
<span class="t" style="left:339.0px;top:1551.9px;font-size:35px;color:#c6c4d2;transform:scaleX(1.0530);">25</span>
<span class="t" style="left:432.0px;top:1551.9px;font-size:35px;color:#c6c4d2;transform:scaleX(1.0530);">26</span>
<span class="t" style="left:526.5px;top:1551.9px;font-size:35px;color:#c6c4d2;transform:scaleX(1.0530);">27</span>
<span class="t" style="left:620.0px;top:1551.9px;font-size:35px;color:#c6c4d2;transform:scaleX(1.0530);">28</span>
<span class="t" style="left:67.0px;top:1635.9px;font-size:35px;color:#c6c4d2;transform:scaleX(1.0273);">1</span>
<span class="t" style="left:162.0px;top:1635.9px;font-size:35px;color:#c6c4d2;transform:scaleX(1.0273);">2</span>
<span class="t" style="left:254.5px;top:1635.9px;font-size:35px;color:#c6c4d2;transform:scaleX(1.0273);">3</span>
<span class="t" style="left:349.5px;top:1635.9px;font-size:35px;color:#c6c4d2;transform:scaleX(1.0273);">4</span>
<span class="t" style="left:442.5px;top:1635.9px;font-size:35px;color:#c6c4d2;transform:scaleX(1.0273);">5</span>
<span class="t" style="left:537.0px;top:1635.9px;font-size:35px;color:#c6c4d2;transform:scaleX(1.0273);">6</span>
<span class="t" style="left:630.5px;top:1635.9px;font-size:35px;color:#c6c4d2;transform:scaleX(1.0273);">7</span>
<span class="t" style="left:67.0px;top:1719.9px;font-size:35px;color:#c6c4d2;transform:scaleX(1.0273);">8</span>
<span class="t" style="left:162.0px;top:1719.9px;font-size:35px;color:#c6c4d2;transform:scaleX(1.0273);">9</span>
<span class="t" style="left:244.0px;top:1719.9px;font-size:35px;color:#c6c4d2;transform:scaleX(1.0530);">10</span>
<span class="t" style="left:339.0px;top:1719.9px;font-size:35px;color:#c6c4d2;transform:scaleX(1.1281);">11</span>
<span class="t" style="left:432.0px;top:1719.9px;font-size:35px;color:#c6c4d2;transform:scaleX(1.0530);">12</span>
<span class="t" style="left:526.5px;top:1719.9px;font-size:35px;color:#c6c4d2;transform:scaleX(1.0530);">13</span>
<span class="t" style="left:620.0px;top:1719.9px;font-size:35px;color:#c6c4d2;transform:scaleX(1.0530);">14</span>
<span class="t" style="left:48.5px;top:1844.0px;font-size:39px;color:#4b4957;font-weight:700;letter-spacing:2px;transform:scaleX(0.9614);">Cancel</span>
<span class="t" style="left:515.5px;top:1850.9px;font-size:32px;color:#4038e0;font-weight:700;letter-spacing:3px;transform:scaleX(0.9642);">APPLY</span>
<span class="t" style="left:882.5px;top:24.0px;font-size:39px;color:#e3e3e3;transform:scaleX(0.9718);">DevTools is now available in French</span>
<span class="t" style="left:1573.5px;top:24.8px;font-size:38px;color:#88d1e8;-webkit-text-stroke:0.9px;transform:scaleX(0.9730);">Don&#x27;t show again</span>
<span class="t" style="left:1957.0px;top:24.8px;font-size:38px;color:#d9edf4;-webkit-text-stroke:0.9px;transform:scaleX(0.9489);">Always match Chrome&#x27;s language</span>
<span class="t" style="left:2598.5px;top:24.8px;font-size:38px;color:#d9edf4;-webkit-text-stroke:0.9px;transform:scaleX(0.9459);">Switch DevTools to French</span>
<span class="t" style="left:964.5px;top:128.0px;font-size:36px;color:#c4c7c9;-webkit-text-stroke:0.9px;transform:scaleX(0.9728);">Elements</span>
<span class="t" style="left:1173.0px;top:128.0px;font-size:36px;color:#c4c7c9;-webkit-text-stroke:0.9px;transform:scaleX(0.9804);">Console</span>
<span class="t" style="left:1365.0px;top:128.0px;font-size:36px;color:#c4c7c9;-webkit-text-stroke:0.9px;transform:scaleX(0.9540);">Sources</span>
<span class="t" style="left:1555.0px;top:128.0px;font-size:36px;color:#88d1e8;-webkit-text-stroke:0.9px;transform:scaleX(1.0566);">Network</span>
<span class="t" style="left:1804.0px;top:128.0px;font-size:36px;color:#c4c7c9;-webkit-text-stroke:0.9px;transform:scaleX(1.0044);">Performance</span>
<span class="t" style="left:2074.5px;top:128.0px;font-size:36px;color:#c4c7c9;-webkit-text-stroke:0.9px;transform:scaleX(1.0653);">Memory</span>
<span class="t" style="left:2275.0px;top:128.0px;font-size:36px;color:#c4c7c9;-webkit-text-stroke:0.9px;transform:scaleX(1.0589);">Application</span>
<span class="t" style="left:2769.0px;top:124.0px;font-size:36px;color:#c4c7c9;transform:scaleX(0.9321);">704</span>
<span class="t" style="left:2889.5px;top:124.0px;font-size:36px;color:#c4c7c9;transform:scaleX(0.8736);">5</span>
<span class="t" style="left:1207.0px;top:206.0px;font-size:36px;color:#c4c7c9;transform:scaleX(0.9525);">Preserve log</span>
<span class="t" style="left:1516.0px;top:206.0px;font-size:36px;color:#c4c7c9;transform:scaleX(0.9530);">Disable cache</span>
<span class="t" style="left:1775.5px;top:206.0px;font-size:36px;color:#e3e3e3;transform:scaleX(1.0561);">No throttling</span>
<span class="t" style="left:837.0px;top:286.5px;font-size:36px;color:#e3e3e3;transform:scaleX(0.9647);">GetExperiments</span>
<span class="t" style="left:2830.5px;top:286.5px;font-size:36px;color:#c4c7c9;transform:scaleX(0.9939);">Invert</span>
<span class="t" style="left:3011.5px;top:286.5px;font-size:36px;color:#c4c7c9;transform:scaleX(1.0139);">More filters</span>
<span class="t" style="left:768.5px;top:362.5px;font-size:36px;color:#ffffff;-webkit-text-stroke:1.15px;transform:scaleX(0.9496);">All</span>
<span class="t" style="left:870.5px;top:362.5px;font-size:36px;color:#e3e3e3;-webkit-text-stroke:1.15px;transform:scaleX(0.8975);">Fetch/XHR</span>
<span class="t" style="left:1079.0px;top:362.5px;font-size:36px;color:#e3e3e3;-webkit-text-stroke:1.15px;transform:scaleX(0.8824);">Doc</span>
<span class="t" style="left:1185.5px;top:362.5px;font-size:36px;color:#e3e3e3;-webkit-text-stroke:1.15px;transform:scaleX(0.7294);">CSS</span>
<span class="t" style="left:1290.0px;top:362.5px;font-size:36px;color:#e3e3e3;-webkit-text-stroke:1.15px;transform:scaleX(0.6902);">JS</span>
<span class="t" style="left:1368.5px;top:362.5px;font-size:36px;color:#e3e3e3;-webkit-text-stroke:1.15px;transform:scaleX(0.9161);">Font</span>
<span class="t" style="left:1484.5px;top:362.5px;font-size:36px;color:#e3e3e3;-webkit-text-stroke:1.15px;transform:scaleX(0.9248);">Img</span>
<span class="t" style="left:1590.5px;top:362.5px;font-size:36px;color:#e3e3e3;-webkit-text-stroke:1.15px;transform:scaleX(0.9484);">Media</span>
<span class="t" style="left:1733.5px;top:362.5px;font-size:36px;color:#e3e3e3;-webkit-text-stroke:1.15px;transform:scaleX(0.9518);">Manifest</span>
<span class="t" style="left:1912.5px;top:362.5px;font-size:36px;color:#e3e3e3;-webkit-text-stroke:1.15px;transform:scaleX(0.8768);">Socket</span>
<span class="t" style="left:2059.5px;top:362.5px;font-size:36px;color:#e3e3e3;-webkit-text-stroke:1.15px;transform:scaleX(0.8892);">Wasm</span>
<span class="t" style="left:2199.5px;top:362.5px;font-size:36px;color:#e3e3e3;-webkit-text-stroke:1.15px;transform:scaleX(0.9217);">Other</span>
<span class="t" style="left:985.5px;top:435.6px;font-size:30px;color:#e8eaed;transform:scaleX(0.9101);">50,000 ms</span>
<span class="t" style="left:1351.5px;top:435.6px;font-size:30px;color:#e8eaed;transform:scaleX(0.9057);">100,000 ms</span>
<span class="t" style="left:1736.5px;top:435.6px;font-size:30px;color:#e8eaed;transform:scaleX(0.9089);">150,000 ms</span>
<span class="t" style="left:2116.0px;top:435.6px;font-size:30px;color:#e8eaed;transform:scaleX(0.9153);">200,000 ms</span>
<span class="t" style="left:2497.5px;top:435.6px;font-size:30px;color:#e8eaed;transform:scaleX(0.9153);">250,000 ms</span>
<span class="t" style="left:2881.5px;top:435.6px;font-size:30px;color:#e8eaed;transform:scaleX(0.9121);">300,000 ms</span>
<span class="t" style="left:3263.0px;top:435.6px;font-size:30px;color:#e8eaed;transform:scaleX(1.0187);">350</span>
<span class="t" style="left:753.5px;top:684.0px;font-size:36px;color:#e3e3e3;transform:scaleX(0.9736);">Name</span>
<span class="t" style="left:807.0px;top:759.0px;font-size:36px;color:#e3e3e3;transform:scaleX(0.9837);">graphql?query=ExperimentsD...</span>
<span class="t" style="left:807.0px;top:822.0px;font-size:36px;color:#e3e3e3;transform:scaleX(0.9837);">graphql?query=ExperimentsD...</span>
<span class="t" style="left:807.0px;top:884.5px;font-size:36px;color:#e3e3e3;transform:scaleX(0.9837);">graphql?query=ExperimentsD...</span>
<span class="t" style="left:1477.0px;top:688.0px;font-size:36px;color:#c4c7c9;-webkit-text-stroke:0.9px;transform:scaleX(0.9700);">Headers</span>
<span class="t" style="left:1672.0px;top:688.0px;font-size:36px;color:#88d1e8;-webkit-text-stroke:0.9px;transform:scaleX(0.9646);">Payload</span>
<span class="t" style="left:1861.0px;top:688.0px;font-size:36px;color:#c4c7c9;-webkit-text-stroke:0.9px;transform:scaleX(0.9762);">Preview</span>
<span class="t" style="left:2050.0px;top:688.0px;font-size:36px;color:#c4c7c9;-webkit-text-stroke:0.9px;transform:scaleX(0.9531);">Response</span>
<span class="t" style="left:2266.5px;top:688.0px;font-size:36px;color:#c4c7c9;-webkit-text-stroke:0.9px;transform:scaleX(1.0969);">Initiator</span>
<span class="t" style="left:2458.0px;top:688.0px;font-size:36px;color:#c4c7c9;-webkit-text-stroke:0.9px;transform:scaleX(1.0498);">Timing</span>
<span class="t" style="left:1402.0px;top:782.5px;font-size:36px;color:#e3e3e3;font-weight:700;transform:scaleX(0.9807);">Query String Parameters</span>
<span class="t" style="left:1947.5px;top:780.8px;font-size:38px;color:#88d1e8;-webkit-text-stroke:0.9px;transform:scaleX(0.9452);">View source</span>
<span class="t" style="left:2310.5px;top:780.8px;font-size:38px;color:#88d1e8;-webkit-text-stroke:0.9px;transform:scaleX(0.9662);">View decoded</span>
<span class="t" style="left:1383.0px;top:866.0px;font-size:36px;color:#c4c7c9;-webkit-text-stroke:0.9px;transform:scaleX(0.9327);">query</span>
<span class="t" style="left:1871.0px;top:866.5px;font-size:36px;color:#e3e3e3;transform:scaleX(0.9598);">ExperimentsDashboardRedesign_GetExperiments</span>
<span class="t" style="left:1402.0px;top:973.0px;font-size:36px;color:#e3e3e3;font-weight:700;transform:scaleX(0.9566);">Request Payload</span>
<span class="t" style="left:1809.5px;top:972.3px;font-size:38px;color:#88d1e8;-webkit-text-stroke:0.9px;transform:scaleX(0.9501);">View source</span>
<span class="t m" style="left:1436.5px;top:1052.2px;font-size:33px;color:#e3e3e3;-webkit-text-stroke:0.35px;">{operationName: &quot;ExperimentsDashboardRedesign_GetExperiments&quot;,…}</span>
<span class="t m" style="left:1443.0px;top:1097.2px;font-size:33px;color:#7fabf6;-webkit-text-stroke:0.35px;">operationName</span>
<span class="t m" style="left:1700.4px;top:1097.2px;font-size:33px;color:#e3e3e3;-webkit-text-stroke:0.35px;">: </span>
<span class="t m" style="left:1740.0px;top:1097.2px;font-size:33px;color:#6accf7;-webkit-text-stroke:0.35px;">&quot;ExperimentsDashboardRedesign_GetExperiments&quot;</span>
<span class="t m" style="left:1443.0px;top:1148.7px;font-size:33px;color:#7fabf6;-webkit-text-stroke:0.35px;">query</span>
<span class="t m" style="left:1542.0px;top:1148.7px;font-size:33px;color:#e3e3e3;-webkit-text-stroke:0.35px;">: </span>
<span class="t m" style="left:1581.6px;top:1148.7px;font-size:33px;color:#6accf7;-webkit-text-stroke:0.35px;">&quot;query ExperimentsDashboardRedesign_GetExperiments($first: Int, $after: String, $filter: ExperimentFilter, $sort: [Sort])</span>
<span class="t m" style="left:1467.5px;top:1196.2px;font-size:33px;color:#7fabf6;-webkit-text-stroke:0.35px;">variables</span>
<span class="t m" style="left:1645.7px;top:1196.2px;font-size:33px;color:#e3e3e3;-webkit-text-stroke:0.35px;">: {filter: {and: [{condition: {field: &quot;dateStatusModified&quot;, operator: &quot;BETWEEN&quot;,…}},…]}, sort: […]}</span>
<span class="t m" style="left:1497.5px;top:1244.2px;font-size:33px;color:#7fabf6;-webkit-text-stroke:0.35px;">filter</span>
<span class="t m" style="left:1616.3px;top:1244.2px;font-size:33px;color:#e3e3e3;-webkit-text-stroke:0.35px;">: {and: [{condition: {field: &quot;dateStatusModified&quot;, operator: &quot;BETWEEN&quot;,…}},…]}</span>
<span class="t m" style="left:1527.5px;top:1292.2px;font-size:33px;color:#7fabf6;-webkit-text-stroke:0.35px;">and</span>
<span class="t m" style="left:1586.9px;top:1292.2px;font-size:33px;color:#e3e3e3;-webkit-text-stroke:0.35px;">: [{condition: {field: &quot;dateStatusModified&quot;, operator: &quot;BETWEEN&quot;,…}},…]</span>
<span class="t m" style="left:1557.5px;top:1340.2px;font-size:33px;color:#7fabf6;-webkit-text-stroke:0.35px;">0</span>
<span class="t m" style="left:1577.3px;top:1340.2px;font-size:33px;color:#e3e3e3;-webkit-text-stroke:0.35px;">: {condition: {field: &quot;dateStatusModified&quot;, operator: &quot;BETWEEN&quot;,…}}</span>
<span class="t m" style="left:1588.0px;top:1387.7px;font-size:33px;color:#7fabf6;-webkit-text-stroke:0.35px;">condition</span>
<span class="t m" style="left:1766.2px;top:1387.7px;font-size:33px;color:#e3e3e3;-webkit-text-stroke:0.35px;">: {field: &quot;dateStatusModified&quot;, operator: &quot;BETWEEN&quot;,…}</span>
<span class="t m" style="left:1593.0px;top:1439.2px;font-size:33px;color:#7fabf6;-webkit-text-stroke:0.35px;">field</span>
<span class="t m" style="left:1692.0px;top:1439.2px;font-size:33px;color:#e3e3e3;-webkit-text-stroke:0.35px;">: </span>
<span class="t m" style="left:1731.6px;top:1439.2px;font-size:33px;color:#6accf7;-webkit-text-stroke:0.35px;">&quot;dateStatusModified&quot;</span>
<span class="t m" style="left:1593.0px;top:1490.7px;font-size:33px;color:#7fabf6;-webkit-text-stroke:0.35px;">operator</span>
<span class="t m" style="left:1751.4px;top:1490.7px;font-size:33px;color:#e3e3e3;-webkit-text-stroke:0.35px;">: </span>
<span class="t m" style="left:1791.0px;top:1490.7px;font-size:33px;color:#6accf7;-webkit-text-stroke:0.35px;">&quot;BETWEEN&quot;</span>
<span class="t m" style="left:1617.0px;top:1539.2px;font-size:33px;color:#7fabf6;-webkit-text-stroke:0.35px;">parameters</span>
<span class="t m" style="left:1815.0px;top:1539.2px;font-size:33px;color:#e3e3e3;-webkit-text-stroke:0.35px;">: [&quot;2025-12-31T23:59:59&quot;, &quot;2026-02-20T23:59:59&quot;]</span>
<span class="t m" style="left:1557.5px;top:1585.2px;font-size:33px;color:#7fabf6;-webkit-text-stroke:0.35px;">1</span>
<span class="t m" style="left:1577.3px;top:1585.2px;font-size:33px;color:#e3e3e3;-webkit-text-stroke:0.35px;">: {condition: {field: &quot;status&quot;, operator: &quot;IN&quot;, parameters: [&quot;PAUSED&quot;, &quot;STOPPED&quot;]}}</span>
<span class="t m" style="left:1588.0px;top:1633.2px;font-size:33px;color:#7fabf6;-webkit-text-stroke:0.35px;">condition</span>
<span class="t m" style="left:1766.2px;top:1633.2px;font-size:33px;color:#e3e3e3;-webkit-text-stroke:0.35px;">: {field: &quot;status&quot;, operator: &quot;IN&quot;, parameters: [&quot;PAUSED&quot;, &quot;STOPPED&quot;]}</span>
<span class="t m" style="left:1593.0px;top:1685.2px;font-size:33px;color:#7fabf6;-webkit-text-stroke:0.35px;">field</span>
<span class="t m" style="left:1692.0px;top:1685.2px;font-size:33px;color:#e3e3e3;-webkit-text-stroke:0.35px;">: </span>
<span class="t m" style="left:1731.6px;top:1685.2px;font-size:33px;color:#6accf7;-webkit-text-stroke:0.35px;">&quot;status&quot;</span>
<span class="t m" style="left:1593.0px;top:1736.2px;font-size:33px;color:#7fabf6;-webkit-text-stroke:0.35px;">operator</span>
<span class="t m" style="left:1751.4px;top:1736.2px;font-size:33px;color:#e3e3e3;-webkit-text-stroke:0.35px;">: </span>
<span class="t m" style="left:1791.0px;top:1736.2px;font-size:33px;color:#6accf7;-webkit-text-stroke:0.35px;">&quot;IN&quot;</span>
<span class="t m" style="left:1617.0px;top:1785.2px;font-size:33px;color:#7fabf6;-webkit-text-stroke:0.35px;">parameters</span>
<span class="t m" style="left:1815.0px;top:1785.2px;font-size:33px;color:#e3e3e3;-webkit-text-stroke:0.35px;">: [&quot;PAUSED&quot;, &quot;STOPPED&quot;]</span>
<span class="t m" style="left:1497.5px;top:1832.2px;font-size:33px;color:#7fabf6;-webkit-text-stroke:0.35px;">sort</span>
<span class="t m" style="left:1576.7px;top:1832.2px;font-size:33px;color:#e3e3e3;-webkit-text-stroke:0.35px;">: [{field: &quot;dateModified&quot;, direction: &quot;DESC&quot;}]</span>
</body></html>
